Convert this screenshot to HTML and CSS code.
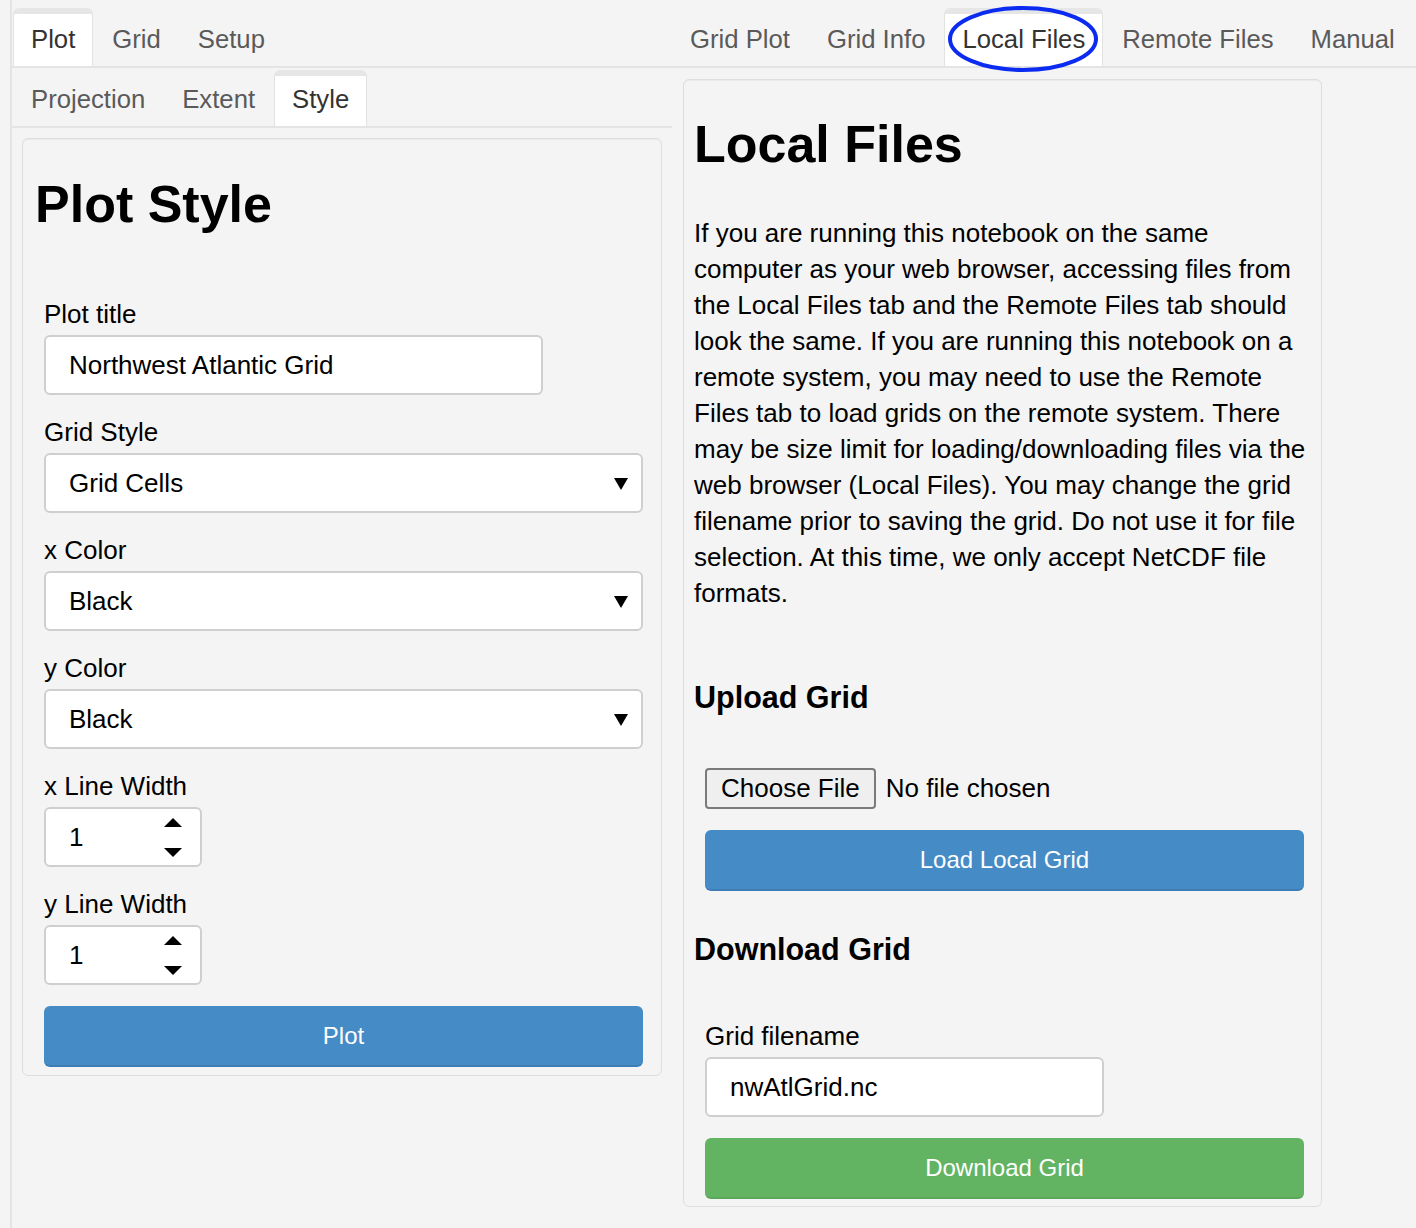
FILE: index.html
```html
<!DOCTYPE html>
<html>
<head>
<meta charset="utf-8">
<link rel="stylesheet" href="styles.css">
</head>
<body>
<div class="app">
  <div class="tabbar top">
    <div class="tabs left-tabs">
      <div class="tab active">Plot</div>
      <div class="tab">Grid</div>
      <div class="tab">Setup</div>
    </div>
    <div class="tabs right-tabs">
      <div class="tab">Grid Plot</div>
      <div class="tab">Grid Info</div>
      <div class="tab active">Local Files</div>
      <div class="tab">Remote Files</div>
      <div class="tab">Manual</div>
    </div>
  </div>
  <div class="main">
    <div class="col-left">
      <div class="tabbar sub">
        <div class="tab">Projection</div>
        <div class="tab">Extent</div>
        <div class="tab active">Style</div>
      </div>
      <div class="card left-card">
        <h1 class="title">Plot Style</h1>
        <div class="form">
          <div class="field">
            <div class="label">Plot title</div>
            <div class="input text-input">Northwest Atlantic Grid</div>
          </div>
          <div class="field">
            <div class="label">Grid Style</div>
            <div class="input select"><span>Grid Cells</span><svg class="caret" width="14" height="12" viewBox="0 0 14 12"><polygon points="0,0 14,0 7,12" fill="#000"/></svg></div>
          </div>
          <div class="field">
            <div class="label">x Color</div>
            <div class="input select"><span>Black</span><svg class="caret" width="14" height="12" viewBox="0 0 14 12"><polygon points="0,0 14,0 7,12" fill="#000"/></svg></div>
          </div>
          <div class="field">
            <div class="label">y Color</div>
            <div class="input select"><span>Black</span><svg class="caret" width="14" height="12" viewBox="0 0 14 12"><polygon points="0,0 14,0 7,12" fill="#000"/></svg></div>
          </div>
          <div class="field">
            <div class="label">x Line Width</div>
            <div class="input number"><span>1</span><span class="spin"><svg width="18" height="9" viewBox="0 0 18 9"><polygon points="9,0 18,9 0,9" fill="#000"/></svg><svg width="18" height="9" viewBox="0 0 18 9"><polygon points="0,0 18,0 9,9" fill="#000"/></svg></span></div>
          </div>
          <div class="field">
            <div class="label">y Line Width</div>
            <div class="input number"><span>1</span><span class="spin"><svg width="18" height="9" viewBox="0 0 18 9"><polygon points="9,0 18,9 0,9" fill="#000"/></svg><svg width="18" height="9" viewBox="0 0 18 9"><polygon points="0,0 18,0 9,9" fill="#000"/></svg></span></div>
          </div>
          <div class="btn primary">Plot</div>
        </div>
      </div>
    </div>
    <div class="col-right">
      <div class="card right-card">
        <h1 class="title">Local Files</h1>
        <p class="para">If you are running this notebook on the same<br>computer as your web browser, accessing files from<br>the Local Files tab and the Remote Files tab should<br>look the same. If you are running this notebook on a<br>remote system, you may need to use the Remote<br>Files tab to load grids on the remote system. There<br>may be size limit for loading/downloading files via the<br>web browser (Local Files). You may change the grid<br>filename prior to saving the grid. Do not use it for file<br>selection. At this time, we only accept NetCDF file<br>formats.</p>
        <h3 class="sub-title">Upload Grid</h3>
        <div class="form group">
          <div class="file-row"><span class="file-btn">Choose File</span><span class="file-none">No file chosen</span></div>
          <div class="btn primary">Load Local Grid</div>
        </div>
        <h3 class="sub-title dl">Download Grid</h3>
        <div class="form group">
          <div class="field">
            <div class="label">Grid filename</div>
            <div class="input file-input">nwAtlGrid.nc</div>
          </div>
          <div class="btn success">Download Grid</div>
        </div>
      </div>
    </div>
  </div>
</div>
<svg class="annot" width="154" height="72" viewBox="0 0 154 72"><ellipse cx="77" cy="35" rx="73" ry="31" fill="none" stroke="#0b2cf0" stroke-width="4"/></svg>
</body>
</html>
```
FILE: styles.css
```css
* { box-sizing: border-box; }
html, body { margin: 0; padding: 0; background: #f4f4f4; }
body {
  position: relative;
  font-family: "Liberation Sans", Arial, Helvetica, sans-serif;
  font-size: 26px;
  color: #000;
  width: 1416px;
  min-height: 1228px;
  overflow: hidden;
}
.app {
  margin-left: 10px;
  border-left: 2px solid #e4e4e4;
  min-height: 1228px;
  padding-top: 8px;
}
.tabbar {
  display: flex;
  border-bottom: 2px solid #e4e4e4;
}
.tabs { display: flex; flex-shrink: 0; }
.left-tabs { width: 660px; padding-left: 1px; }
.sub { padding-top: 2px; padding-left: 1px; }
.tab {
  height: 58px;
  display: flex;
  align-items: center;
  padding: 2px 17px 0 17px;
  margin-right: 1px;
  border: 1px solid transparent;
  border-bottom: none;
  color: #5a5a5a;
  font-size: 25.7px;
  white-space: nowrap;
}
.top .tab { padding-top: 3px; }
.sub .tab { height: 56px; }
.tab.active {
  background: #fff;
  color: #333;
  border-color: #e2e2e2;
  border-top: 6px solid #e6e6e6;
  padding-top: 0;
  padding-bottom: 3px;
  border-radius: 6px 6px 0 0;
}
.top .tab.active { padding-top: 0; padding-bottom: 1px; }
.main { display: flex; }
.col-left { width: 660px; flex-shrink: 0; }
.col-right { width: 744px; }
.card {
  border: 1px solid #dedede;
  border-radius: 6px;
  background: #f4f4f4;
  box-shadow: inset 0 1px 1px rgba(0,0,0,0.04);
  padding: 0 10px;
}
.left-card { margin: 10px 0 0 10px; width: 640px; padding-bottom: 8px; }
.right-card { margin: 11px 0 0 11px; width: 639px; padding-bottom: 7px; }
.title {
  font-size: 52px;
  line-height: 56px;
  font-weight: bold;
  margin: 37px 0 0 0;
}
.left-card .title { margin-bottom: 66px; margin-left: 2px; }
.right-card .title { margin-top: 36px; }
.form {
  display: flex;
  flex-direction: column;
  gap: 21px;
  margin-left: 11px;
}
.label {
  line-height: 32px;
  margin-bottom: 5px;
}
.input {
  height: 60px;
  background: #fff;
  border: 2px solid #cfcfcf;
  border-radius: 6px;
  display: flex;
  align-items: center;
  padding: 0 13px 0 23px;
}
.text-input { width: 499px; }
.file-input { width: 399px; }
.select { width: 599px; justify-content: space-between; }
.caret { margin-top: 2px; }
.number { width: 158px; justify-content: space-between; padding-right: 18px; }
.spin {
  display: flex;
  flex-direction: column;
  gap: 21px;
}
.spin svg { display: block; }
.btn {
  width: 599px;
  height: 61px;
  border-radius: 6px;
  color: #fff;
  font-size: 24px;
  display: flex;
  align-items: center;
  justify-content: center;
}
.primary { background: #458bc6; border-bottom: 2px solid #3c7db6; }
.success { background: #63b462; border-bottom: 2px solid #5aa75a; }
.para {
  margin: 43px 0 0 0;
  line-height: 36px;
  white-space: nowrap;
}
.sub-title {
  font-size: 30.5px;
  line-height: 36px;
  font-weight: bold;
  margin: 68px 0 0 0;
}
.sub-title.dl { margin-top: 40px; }
.group { margin-top: 53px; }
.file-row {
  display: flex;
  align-items: center;
  height: 41px;
}
.file-btn {
  height: 41px;
  padding: 0 14px;
  border: 2px solid #7a7a7a;
  border-radius: 4px;
  background: #efefef;
  display: flex;
  align-items: center;
}
.file-none { margin-left: 10px; }
.annot {
  position: absolute;
  left: 946px;
  top: 4px;
}
```
